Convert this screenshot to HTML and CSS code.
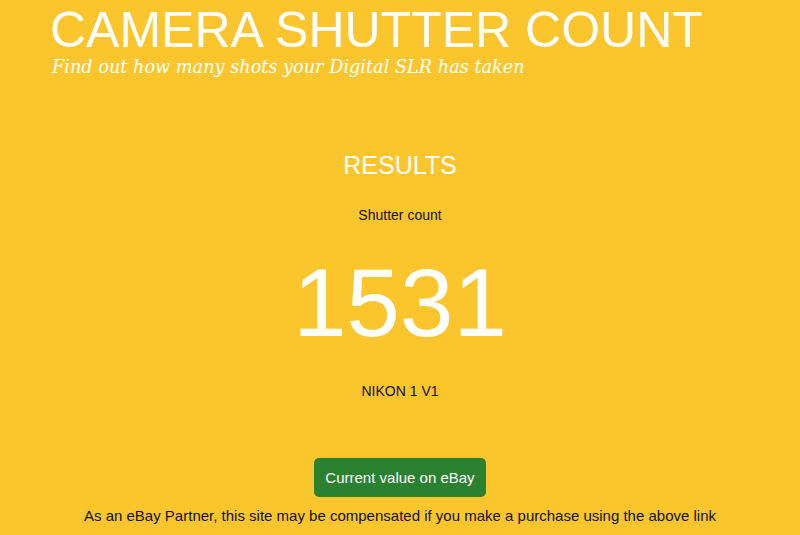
FILE: index.html
```html
<!DOCTYPE html>
<html>
<head>
<meta charset="utf-8">
<link rel="stylesheet" href="styles.css">
</head>
<body>
<header class="header">
  <h1 class="title">CAMERA SHUTTER COUNT</h1>
  <p class="tagline">Find out how many shots your Digital SLR has taken</p>
</header>
<main class="results">
  <h2 class="results-title">RESULTS</h2>
  <p class="label">Shutter count</p>
  <div class="count">1531</div>
  <p class="model">NIKON 1 V1</p>
  <a class="ebay-btn" href="#">Current value on eBay</a>
  <p class="disclaimer">As an eBay Partner, this site may be compensated if you make a purchase using the above link</p>
</main>
</body>
</html>
```
FILE: styles.css
```css
html, body {
  margin: 0;
  padding: 0;
  background: #fbc62d;
  font-family: "Liberation Sans", Arial, sans-serif;
}
.header {
  padding: 0 50px;
}
.title {
  margin: 0;
  padding-top: 1px;
  font-weight: normal;
  font-size: 50px;
  line-height: 58px;
  color: #fff;
}
.tagline {
  margin: 0 0 0 2px;
  font-family: "DejaVu Serif", Georgia, serif;
  font-style: italic;
  font-size: 17.7px;
  line-height: 17px;
  color: #fff;
}
.results {
  display: flex;
  flex-direction: column;
  align-items: center;
  text-align: center;
  padding-top: 74px;
}
.results-title {
  margin: 0;
  font-weight: normal;
  font-size: 25px;
  line-height: 30px;
  color: #fff;
}
.label {
  margin: 27px 0 0;
  font-size: 14px;
  line-height: 16px;
  color: #111;
}
.count {
  margin-top: 28px;
  font-size: 96px;
  line-height: 104px;
  color: #fff;
}
.model {
  margin: 28px 0 0;
  font-size: 14px;
  line-height: 16px;
  color: #111;
}
.ebay-btn {
  margin-top: 59px;
  display: block;
  width: 172px;
  height: 39px;
  line-height: 39px;
  box-sizing: border-box;
  background: #2b8130;
  color: #fff;
  border-radius: 5px;
  text-decoration: none;
  font-size: 15px;
}
.disclaimer {
  margin: 8px 0 0;
  font-size: 15px;
  line-height: 22px;
  color: #111;
}
```
